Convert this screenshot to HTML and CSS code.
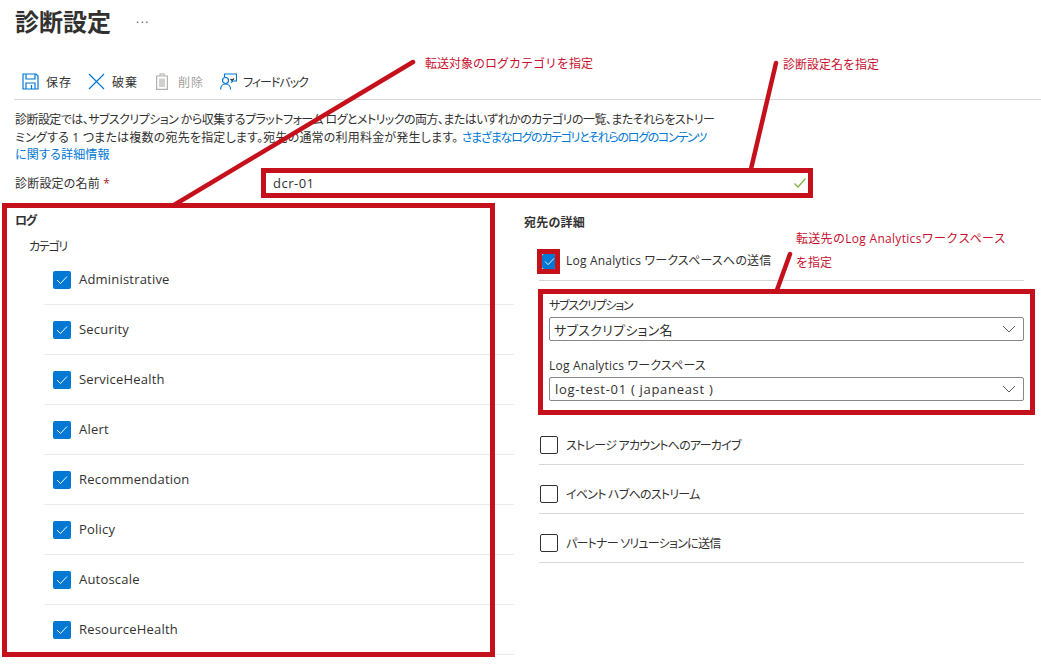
FILE: index.html
```html
<!DOCTYPE html>
<html lang="ja">
<head>
  <meta charset="UTF-8" />
  <title>診断設定</title>
  <link rel="stylesheet" href="styles.css">
</head>
<body>

  <!-- Title -->
  <header class="title-bar">
    <h1>診断設定</h1>
    <span class="more">...</span>
  </header>

  <!-- Toolbar -->
  <div class="toolbar">
    <div class="tool tool-save">
      <svg width="17" height="17" viewBox="0 0 17 17" fill="none" stroke="#0078d4" stroke-width="1.2">
        <path d="M1 1h13l2 2v13H1z"/>
        <path d="M4 1v5h9V1"/>
        <path d="M4 16v-6h9v6"/>
        <path d="M9.5 12v4"/>
      </svg>
      <span>保存</span>
    </div>
    <div class="tool tool-discard">
      <svg width="17" height="17" viewBox="0 0 17 17" fill="none" stroke="#0078d4" stroke-width="1.2">
        <path d="M1 1l15 15M16 1L1 16"/>
      </svg>
      <span>破棄</span>
    </div>
    <div class="tool tool-delete disabled">
      <svg width="12" height="17" viewBox="0 0 12 17" fill="none" stroke="#b3b0ad" stroke-width="1.2">
        <path d="M0.6 3h10.8v13.4H0.6z"/>
        <path d="M4 3V1h4v2"/>
        <path d="M3 5.500h6v8.500H3z" fill="#d2d0ce" stroke="none"/>
      </svg>
      <span>削除</span>
    </div>
    <div class="tool tool-feedback">
      <svg width="17" height="17" viewBox="0 0 17 17" fill="none" stroke="#0078d4" stroke-width="1.2">
        <path d="M4.500 4V1h12v7h-3.500l-2 1.500"/>
        <circle cx="5.500" cy="7.500" r="3"/>
        <path d="M0.600 16.500c0-3 2-5.500 5-5.500s5 2.500 5 5.500"/>
        <path d="M10.500 6l1.500 1.500 2-2" stroke="#323130"/>
      </svg>
      <span>フィードバック</span>
    </div>
  </div>

  <!-- Description -->
  <p class="description">
    <span class="line line-1">診断設定では、サブスクリプション から収集するプラットフォーム ログとメトリックの両方、またはいずれかのカテゴリの一覧、またそれらをストリー</span>
    <span class="line line-2">ミングする 1 つまたは複数の宛先を指定します。宛先の通常の利用料金が発生します。 <a href="#">さまざまなログのカテゴリとそれらのログのコンテンツ</a></span>
    <span class="line"><a href="#">に関する詳細情報</a></span>
  </p>

  <!-- Name -->
  <div class="name-row">
    <label class="name-label">診断設定の名前 <span class="required">*</span></label>
    <div class="name-input">
      <span>dcr-01</span>
      <svg width="12" height="10" viewBox="0 0 12 10" fill="none" stroke="#7fb23f" stroke-width="1.2">
        <path d="M0.500 5.500l3.500 3.500 7.500-8.500"/>
      </svg>
    </div>
  </div>

  <div class="columns">
    <!-- Logs -->
    <section class="logs">
      <h3 class="logs-title">ログ</h3>
      <div class="category-title">カテゴリ</div>
      <div class="log-row"><span class="check on"><svg width="12" height="10" viewBox="0 0 12 10"><path d="M1 5l3.500 3.500L11 1.500"/></svg></span>Administrative</div>
      <div class="log-row"><span class="check on"><svg width="12" height="10" viewBox="0 0 12 10"><path d="M1 5l3.500 3.500L11 1.500"/></svg></span>Security</div>
      <div class="log-row"><span class="check on"><svg width="12" height="10" viewBox="0 0 12 10"><path d="M1 5l3.500 3.500L11 1.500"/></svg></span>ServiceHealth</div>
      <div class="log-row"><span class="check on"><svg width="12" height="10" viewBox="0 0 12 10"><path d="M1 5l3.500 3.500L11 1.500"/></svg></span>Alert</div>
      <div class="log-row"><span class="check on"><svg width="12" height="10" viewBox="0 0 12 10"><path d="M1 5l3.500 3.500L11 1.500"/></svg></span>Recommendation</div>
      <div class="log-row"><span class="check on"><svg width="12" height="10" viewBox="0 0 12 10"><path d="M1 5l3.500 3.500L11 1.500"/></svg></span>Policy</div>
      <div class="log-row"><span class="check on"><svg width="12" height="10" viewBox="0 0 12 10"><path d="M1 5l3.500 3.500L11 1.500"/></svg></span>Autoscale</div>
      <div class="log-row"><span class="check on"><svg width="12" height="10" viewBox="0 0 12 10"><path d="M1 5l3.500 3.500L11 1.500"/></svg></span>ResourceHealth</div>
    </section>

    <!-- Destinations -->
    <section class="dest">
      <h3 class="dest-title">宛先の詳細</h3>
      <div class="dest-first"><span class="check on small"><svg width="11" height="9" viewBox="0 0 12 10"><path d="M1 5l3.500 3.500L11 1.500"/></svg></span>Log Analytics ワークスペースへの送信</div>
      <div class="dest-form">
        <div class="field-label field-kana">サブスクリプション</div>
        <div class="select">
          <span class="select-name">サブスクリプション名</span>
          <svg width="14" height="8" viewBox="0 0 14 8" fill="none" stroke="#605e5c" stroke-width="1"><path d="M1 1l6 6 6-6"/></svg>
        </div>
        <div class="field-label field-gap">Log Analytics ワークスペース</div>
        <div class="select">
          <span class="select-value">log-test-01 ( japaneast )</span>
          <svg width="14" height="8" viewBox="0 0 14 8" fill="none" stroke="#605e5c" stroke-width="1"><path d="M1 1l6 6 6-6"/></svg>
        </div>
      </div>
      <div class="dest-row"><span class="check"></span>ストレージ アカウントへのアーカイブ</div>
      <div class="dest-row"><span class="check"></span>イベント ハブへのストリーム</div>
      <div class="dest-row"><span class="check"></span>パートナー ソリューションに送信</div>
    </section>
  </div>

  <!-- Red annotations over the screen -->
  <svg class="callout-lines" width="1041" height="668" viewBox="0 0 1041 668" fill="none" stroke="#c5111c" stroke-width="4.500" stroke-linecap="round">
    <path d="M413 62L174 205"/>
    <path d="M776 63L751 169"/>
    <path d="M790 254L777 290"/>
  </svg>
  <div class="red-box box-name"></div>
  <div class="red-box box-logs"></div>
  <div class="red-box box-check"></div>
  <div class="red-box box-workspace"></div>
  <span class="note note-logs">転送対象のログカテゴリを指定</span>
  <span class="note note-name">診断設定名を指定</span>
  <span class="note note-workspace">転送先のLog Analyticsワークスペース</span>
  <span class="note note-workspace2">を指定</span>

</body>
</html>
```

FILE: styles.css
```css
* {
  box-sizing: border-box;
}

html, body {
  height: 668px;
  overflow: hidden;
}

body {
  font-family: "Open Sans", "Noto Sans CJK JP", sans-serif;
  font-size: 13px;
  font-feature-settings: "palt";
  letter-spacing: 0.2px;
  margin: 0;
  background-color: #fff;
  color: #323130;
  position: relative;
}

/* Title */
.title-bar {
  display: flex;
  align-items: flex-start;
  height: 46px;
  padding-left: 15px;
}

.title-bar h1 {
  font-size: 24px;
  font-weight: 600;
  font-feature-settings: normal;
  letter-spacing: 0;
  line-height: 43px;
  margin: 0;
  color: #323130;
}

.more {
  margin: 10px 0 0 25px;
  font-size: 12px;
  letter-spacing: 1.500px;
  color: #605e5c;
}

/* Toolbar */
.toolbar {
  display: flex;
  align-items: center;
  height: 54px;
  margin-left: 14px;
  padding: 18px 0 0 8px;
  border-bottom: 1px solid #d6d6d6;
}

.tool {
  display: flex;
  align-items: center;
  gap: 7px;
  font-size: 12px;
  font-feature-settings: normal;
  letter-spacing: 1px;
}

.tool-discard { margin-left: 16px; }
.tool-delete { margin-left: 18px; gap: 10px; }
.tool-feedback { margin-left: 16px; gap: 6px; font-feature-settings: "palt"; letter-spacing: -1px; }

.tool.disabled {
  color: #a19f9d;
}

/* Description */
.description {
  margin: 0;
  padding: 11px 0 0 15px;
  font-size: 12px;
  line-height: 17.500px;
  height: 68px;
}

.line {
  display: block;
  white-space: nowrap;
}

.line-1 { letter-spacing: -0.550px; }
.line-2 a { letter-spacing: -1.300px; }

a {
  color: #0078d4;
  text-decoration: none;
}

/* Name row */
.name-row {
  display: flex;
  align-items: center;
  height: 30px;
  padding-left: 15px;
}

.name-label {
  width: 247px;
  font-size: 12px;
}

.required {
  color: #a4262c;
}

.name-input {
  display: flex;
  align-items: center;
  justify-content: space-between;
  width: 550px;
  height: 28px;
  padding: 0 6px 0 11px;
  font-size: 13px;
  letter-spacing: 0.500px;
}

/* Columns */
.columns {
  display: flex;
  padding-top: 12px;
}

.logs {
  width: 514px;
  padding-left: 15px;
}

.logs-title {
  font-size: 12px;
  font-weight: 700;
  letter-spacing: -1.500px;
  line-height: 20px;
  margin: 0;
  padding-top: 1px;
  height: 20px;
}

.category-title {
  margin-left: 14px;
  font-size: 12px;
  letter-spacing: -1.300px;
  line-height: 20px;
  height: 25px;
  padding-top: 7px;
}

.log-row {
  display: flex;
  align-items: center;
  gap: 8px;
  height: 50px;
  margin-left: 29px;
  padding: 0 0 2px 9px;
  border-bottom: 1px solid #edebe9;
}

.check {
  display: flex;
  align-items: center;
  justify-content: center;
  width: 18px;
  height: 18px;
  flex-shrink: 0;
  border: 1px solid #323130;
  border-radius: 2px;
  background-color: #fff;
}

.check.on {
  border: none;
  background-color: #0078d4;
}

.log-row .check {
  margin-top: 3px;
}

.check svg {
  fill: none;
  stroke: #fff;
  stroke-width: 1;
}

.check.small {
  width: 14px;
  height: 15px;
  margin-top: 3px;
}

/* Destinations */
.dest {
  width: 500px;
  margin-left: 10px;
}

.dest-title {
  font-size: 12px;
  font-weight: 700;
  line-height: 20px;
  margin: 3px 0 0;
  height: 27px;
}

.dest-first {
  display: flex;
  align-items: center;
  gap: 10px;
  height: 41px;
  margin-left: 15px;
  padding-left: 3px;
  font-size: 12px;
  border-bottom: 1px solid #d6d6d6;
}

.dest-form {
  height: 135px;
  padding: 15px 0 0 25px;
}

.dest-row {
  display: flex;
  align-items: center;
  gap: 8px;
  height: 49px;
  margin-left: 15px;
  padding: 9px 0 0 1px;
  font-size: 12px;
  letter-spacing: -0.750px;
  border-bottom: 1px solid #d6d6d6;
}

.field-label {
  font-size: 12px;
  line-height: 18px;
  height: 21px;
  padding-top: 1px;
}

.field-kana {
  letter-spacing: -1.300px;
}

.field-gap {
  margin-top: 15px;
}

.select {
  display: flex;
  align-items: center;
  justify-content: space-between;
  height: 24px;
  padding: 0 7px 0 4px;
  border: 1px solid #8a8886;
  border-radius: 2px;
  font-size: 13px;
  letter-spacing: 0.300px;
}

.select-value {
  padding-left: 1px;
  letter-spacing: 0.700px;
}

/* Annotations */
.callout-lines {
  position: absolute;
  left: 0;
  top: 0;
}

.red-box {
  position: absolute;
  border: 5px solid #c5111c;
}

.box-name { left: 261px; top: 168px; width: 552px; height: 30px; }
.box-logs { left: 2px; top: 203px; width: 493px; height: 454px; }
.box-check { left: 537px; top: 249px; width: 23px; height: 25px; }
.box-workspace { left: 538px; top: 289px; width: 497px; height: 126px; }

.note {
  position: absolute;
  font-size: 12px;
  font-feature-settings: normal;
  letter-spacing: 0;
  line-height: 16px;
  color: #c8102e;
  white-space: nowrap;
}

.note-logs { left: 425px; top: 56px; }
.note-name { left: 783px; top: 57px; }
.note-workspace { left: 796px; top: 231px; letter-spacing: 0.300px; }
.note-workspace2 { left: 796px; top: 255px; }
```
